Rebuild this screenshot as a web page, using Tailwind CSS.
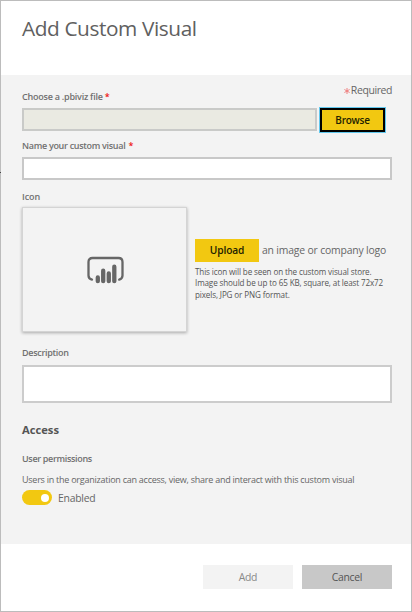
<!DOCTYPE html>
<html lang="en">
<head>
<meta charset="utf-8">
<title>Add Custom Visual</title>
<script src="https://cdn.jsdelivr.net/npm/@tailwindcss/browser@4"></script>
</head>
<body class="bg-white">
<div class="relative flex h-[612px] w-[412px] flex-col border border-[#bcbcbc] bg-white font-['Open_Sans','Noto_Sans',sans-serif] whitespace-nowrap text-[#666666]">
  <span class="absolute -left-px top-[171px] h-px w-px bg-[#444444]"></span>
  <header class="h-[74px] pl-[21px] pt-[12px]">
    <h1 class="text-[20.8px] leading-[30px] tracking-[-0.4px] text-[#606060]"><span>Add Custom Visual</span></h1>
  </header>
  <main class="flex h-[469px] flex-col bg-[#f3f3f3] pl-[21px] pr-[19px]">
    <div class="flex h-[33px] justify-between">
      <label class="pt-[15px] text-[9px] leading-[14px] font-semibold tracking-[-0.23px] text-[#707070]"><span>Choose a .pbiviz file</span> <span class="text-[#ee1111]">*</span></label>
      <div class="flex pt-[8px] text-[10.5px] leading-[14px] tracking-[-0.42px]"><svg class="mr-px mt-[5px] size-[6px]" viewBox="0 0 6 6" fill="none" stroke="#ee7777" stroke-width=".9"><path d="M3 0v6M.4 1.5l5.2 3M.4 4.5l5.2-3"/></svg><span>Required</span></div>
    </div>
    <div class="flex h-6 gap-[3px]">
      <div class="h-[23px] w-[295px] border-2 border-[#c9cac8] bg-[#eaeae2]"></div>
      <button class="h-6 w-[65px] border-2 border-black bg-[#f2c811] text-[10px] leading-[19px] font-semibold tracking-[-0.25px] text-[#222200] outline-1 outline-[#62c8ee]"><span>Browse</span></button>
    </div>
    <label class="mt-[7px] h-[18px] text-[9px] leading-[14px] font-semibold tracking-[-0.3px] text-[#707070]"><span>Name your custom visual</span> <span class="ml-px text-[#ee1111]">*</span></label>
    <div class="h-[23px] w-[370px] border-2 border-[#c8c8c8] bg-white"></div>
    <div class="mt-[10px] h-[17px] text-[9px] leading-[14px] font-semibold tracking-[-0.1px] text-[#707070]"><span>Icon</span></div>
    <div class="flex h-[125px] gap-[8px]">
      <div class="flex w-[165px] shrink-0 items-center justify-center border border-[#d4d4d4] shadow-[0_1px_3px_rgba(0,0,0,0.3)]">
        <svg class="h-[28px] w-[38px] overflow-visible" viewBox="0 0 38 28" fill="none" stroke="#666666" stroke-linecap="round"><path d="M6 23.6C3.5 23 2.5 21.8 2.5 19.5V6Q2.5 2 6.5 2h26Q36.5 2 36.5 6v13.5c0 2.3-1 3.5-3.3 4.1" stroke-width="2.3"/><path d="M11.8 21.4v3.8M17.2 14.7v10.5M22.8 17.4v7.8M28.3 10.7v14.5" stroke-width="4.3"/></svg>
      </div>
      <div class="pt-[32px]">
        <div class="flex h-6 items-start gap-[3px]">
          <button class="h-[23px] w-[64px] bg-[#f2c811] text-[10.2px] leading-[23px] font-semibold tracking-[-0.15px] text-[#222200]"><span>Upload</span></button>
          <span class="text-[10.4px] leading-[23px] tracking-[-0.17px]">an image or company logo</span>
        </div>
        <p class="pt-[3px] text-[8.1px] leading-[11.4px] tracking-[-0.13px] text-[#555555]"><span>This icon will be seen on the custom visual store.</span><br><span>Image should be up to 65 KB, square, at least 72x72</span><br><span>pixels, JPG or PNG format.</span></p>
      </div>
    </div>
    <label class="mt-[14px] h-[19px] text-[9px] leading-[14px] font-semibold tracking-[-0.3px] text-[#707070]"><span>Description</span></label>
    <div class="h-[38px] w-[370px] shrink-0 border-2 border-[#cccccc] bg-white"></div>
    <h2 class="mt-[18px] text-[11.2px] leading-[18px] font-bold text-[#555555]"><span>Access</span></h2>
    <h3 class="mt-[13px] text-[9px] leading-[14px] font-semibold tracking-[-0.33px] text-[#707070]"><span>User permissions</span></h3>
    <p class="mt-[7px] text-[9px] leading-[14px] tracking-[-0.25px]"><span>Users in the organization can access, view, share and interact with this custom visual</span></p>
    <div class="mt-[3px] flex h-[15px] items-center gap-[6px]">
      <div class="flex h-[15px] w-[30px] items-center justify-end rounded-full bg-[#f2c811] pr-[3px]"><span class="size-2 rounded-full bg-white"></span></div>
      <span class="pt-px text-[10.4px] leading-[16px] tracking-[-0.25px]">Enabled</span>
    </div>
  </main>
  <footer class="flex justify-end gap-[9px] pr-[19px] pt-[21px] text-[10.4px] leading-6 tracking-[-0.3px]">
    <button class="h-6 w-[90px] bg-[#f3f3f3] text-[#888888]"><span>Add</span></button>
    <button class="h-6 w-[90px] bg-[#c8c8c8] text-[#555555]"><span>Cancel</span></button>
  </footer>
</div>
</body>
</html>
